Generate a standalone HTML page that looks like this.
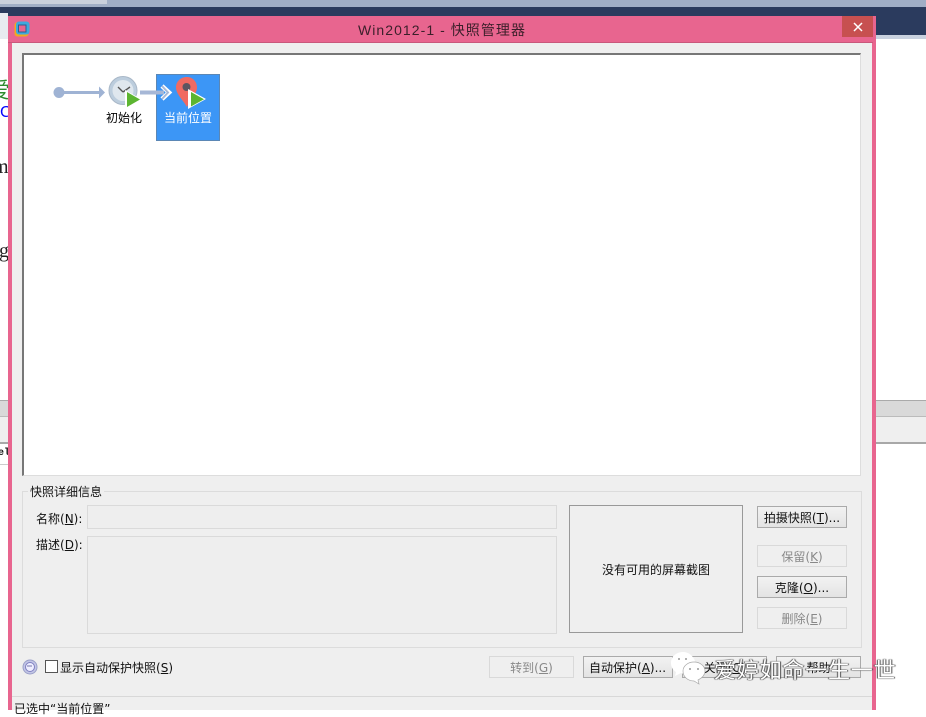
<!DOCTYPE html>
<html><head><meta charset="utf-8"><style>
html,body{margin:0;padding:0}
body{width:926px;height:710px;overflow:hidden;position:relative;background:#fff;font-family:"DejaVu Sans","Noto Sans CJK SC",sans-serif;font-size:12px;color:#111}
.a{position:absolute;box-sizing:border-box}
.t{position:absolute;white-space:nowrap;line-height:16px}
.b{position:absolute;box-sizing:border-box;height:22px;border:1px solid #aaa;background:linear-gradient(#f2f2f2,#e3e3e3);text-align:center;line-height:23px;white-space:nowrap;color:#111}
.d{border:1px solid #d9d9d9;background:#efefef;color:#888}
u{text-underline-offset:1px}
</style></head><body>
<div class="a" style="left:0;top:0;width:926px;height:7px;background:#a0aec6"></div>
<div class="a" style="left:0;top:7px;width:926px;height:28px;background:#2b3b5e"></div>
<div class="a" style="left:876px;top:35px;width:50px;height:4px;background:#c8d1df"></div>
<div class="a" style="left:0;top:0;width:107px;height:4px;background:#c9d0dc"></div>
<div class="a" style="left:0;top:13px;width:8px;height:400px;background:#fff"></div>
<div class="a" style="left:0;top:13px;width:8px;height:26px;background:#e8ebf0"></div>
<div class="t" style="left:-12px;top:73px;font:22px 'Noto Sans CJK SC',sans-serif;color:#2e8b2e">爱</div>
<div class="t" style="left:0;top:104px;font:16px 'Liberation Sans',sans-serif;color:#00f">C</div>
<div class="t" style="left:-7px;top:156px;font:20px 'Liberation Serif',serif;color:#222">m</div>
<div class="t" style="left:-1px;top:240px;font:20px 'Liberation Serif',serif;color:#222">g</div>
<div class="a" style="left:0;top:400px;width:926px;height:17px;background:#d9d9d9;border-top:1px solid #aaa;border-bottom:1px solid #bbb"></div>
<div class="a" style="left:0;top:417px;width:926px;height:25px;background:#efefef"></div>
<div class="a" style="left:0;top:442px;width:926px;height:2px;background:#a8a8a8"></div>
<div class="a" style="left:0;top:464px;width:8px;height:1px;background:#ccc"></div>
<div class="t" style="left:-2px;top:448px;font:bold 10px 'Liberation Mono',monospace">el</div>

<div class="a" style="left:8px;top:16px;width:868px;height:694px;background:#e8658f"></div>
<div class="a" style="left:842px;top:16px;width:31px;height:21px;background:#c75050"></div>
<svg class="a" style="left:852px;top:22px" width="12" height="10"><path d="M2 1L10 9M10 1L2 9" stroke="#fff" stroke-width="1.5"/></svg>
<div class="a" style="left:8px;top:42px;width:865px;height:1px;background:#c9587c"></div>
<div class="a" style="left:12px;top:43px;width:860px;height:667px;background:#efefef"></div>
<svg class="a" style="left:14px;top:21px" width="16" height="16"><rect x="0.5" y="1" width="14" height="14.5" rx="3" fill="#f3a81f"/><rect x="2" y="0.5" width="13.5" height="13" rx="3" fill="#3fa9dd"/><rect x="4.5" y="4" width="7.5" height="7" fill="#e8658f" stroke="#2b5f8f"/></svg>
<div class="t" style="left:358px;top:20px;font-family:'Liberation Sans','Noto Sans CJK SC',sans-serif;font-size:14px;line-height:20px;letter-spacing:1.05px;color:#3b1f2a">Win2012-1 - 快照管理器</div>

<div class="a" style="left:22px;top:53px;width:839px;height:423px;background:#fff;border-top:2px solid #777;border-left:2px solid #777;border-right:1px solid #ddd;border-bottom:1px solid #ddd"></div>
<div class="a" style="left:156px;top:74px;width:64px;height:67px;background:#3c96f6;border:1px solid #5b87b5"></div>
<svg class="a" style="left:50px;top:74px" width="170" height="46">
<circle cx="9" cy="18.5" r="5.5" fill="#9fb3d4"/>
<path d="M12 18.5H51" stroke="#9fb3d4" stroke-width="3"/><path d="M49 12.5L55 18.5L49 24.5Z" fill="#9fb3d4"/>
<circle cx="73" cy="16.5" r="14" fill="#bccddd" stroke="#a9b8c8"/><circle cx="73" cy="16.5" r="10.5" fill="#dfe7ee"/>
<path d="M73 18L68 13M73 18L80 13" stroke="#555" stroke-width="1.4" fill="none"/>
<path d="M75 16L92 25.5L75 35Z" fill="#fff"/>
<path d="M77 18L90 25.5L77 33Z" fill="#5cb531"/>
<path d="M90 18.5H114" stroke="#a6b7d6" stroke-width="4"/><path d="M112 12L119 18.5L112 25" stroke="#fff" stroke-width="4.5" fill="none"/><path d="M112 12L118 18.5L112 25" stroke="#a6b7d6" stroke-width="2" fill="none"/>
<path d="M137 3C130 3 126 8 126 13.5C126 20 133 26 137 33C140 26 147 20 147 13.5C147 8 143 3 137 3Z" fill="#f06a62"/>
<circle cx="136.5" cy="13" r="4" fill="#5c5560"/>
<path d="M138 15L156 25L138 35Z" fill="#fff"/>
<path d="M141 18L154 25.2L141 32.5Z" fill="#5cb531"/>
</svg>
<div class="t" style="left:106px;top:110px;color:#000">初始化</div>
<div class="t" style="left:164px;top:110px;color:#fff">当前位置</div>

<div class="a" style="left:22px;top:491px;width:840px;height:157px;border:1px solid #dcdcdc"></div>
<div class="t" style="left:28px;top:485px;background:#efefef;padding:0 2px;line-height:14px">快照详细信息</div>
<div class="t" style="left:36px;top:511px">名称(<u>N</u>):</div>
<div class="t" style="left:36px;top:537px">描述(<u>D</u>):</div>
<div class="a" style="left:87px;top:505px;width:470px;height:24px;border:1px solid #dadada;background:#eee"></div>
<div class="a" style="left:87px;top:536px;width:470px;height:98px;border:1px solid #dadada;background:#eee"></div>
<div class="a" style="left:569px;top:505px;width:174px;height:128px;border:1px solid #999"></div>
<div class="t" style="left:569px;top:562px;width:174px;text-align:center">没有可用的屏幕截图</div>

<div class="b" style="left:757px;top:506px;width:90px">拍摄快照(<u>T</u>)...</div>
<div class="b d" style="left:757px;top:545px;width:90px">保留(<u>K</u>)</div>
<div class="b" style="left:757px;top:576px;width:90px">克隆(<u>O</u>)...</div>
<div class="b d" style="left:757px;top:607px;width:90px">删除(<u>E</u>)</div>

<svg class="a" style="left:22px;top:659px" width="16" height="16"><circle cx="8" cy="8" r="7" fill="#c3c6e6" stroke="#9a9fc8"/><circle cx="8" cy="8" r="4.5" fill="#eef" stroke="#7f7fc0"/><path d="M5 7H10" stroke="#77a" /></svg>
<div class="a" style="left:45px;top:660px;width:13px;height:13px;border:1px solid #555;background:#fff"></div>
<div class="t" style="left:60px;top:660px">显示自动保护快照(<u>S</u>)</div>

<div class="b d" style="left:489px;top:656px;width:85px">转到(<u>G</u>)</div>
<div class="b" style="left:583px;top:656px;width:90px;text-align:left;padding-left:5px">自动保护(<u>A</u>)...</div>
<div class="b" style="left:682px;top:656px;width:85px">关闭(<u>C</u>)</div>
<div class="b" style="left:776px;top:656px;width:85px">帮助</div>

<div class="a" style="left:12px;top:696px;width:860px;height:1px;background:#d8d8d8"></div>
<div class="t" style="left:14px;top:701px">已选中“当前位置”</div>

<svg class="a" style="left:670px;top:651px" width="40" height="36">
<path d="M13 1C6 1 1 6 1 12C1 16 3 19 6 21L5 25L11 22C13 23 16 23 18 23L25 10C23 5 19 1 13 1Z" fill="#fff"/>
<path d="M24 11C18 11 13 15 13 20C13 26 18 30 24 30L29 33L28 29C32 27 35 24 35 20C35 15 30 11 24 11Z" fill="#fff" stroke="#aaa" stroke-width=".7"/>
<circle cx="9" cy="8" r="1" fill="#999"/><circle cx="16" cy="8" r="1" fill="#999"/><circle cx="20" cy="18" r="1" fill="#999"/><circle cx="28" cy="18" r="1" fill="#999"/>
</svg>
<div class="t" style="left:714px;top:655px;font-family:'Noto Sans CJK SC',sans-serif;font-size:22px;line-height:28px;letter-spacing:.8px;color:#fff;text-shadow:0 0 1px #333,1px 0 1px #555,-1px 0 1px #555">爱婷如命一生一世</div>
</body></html>
